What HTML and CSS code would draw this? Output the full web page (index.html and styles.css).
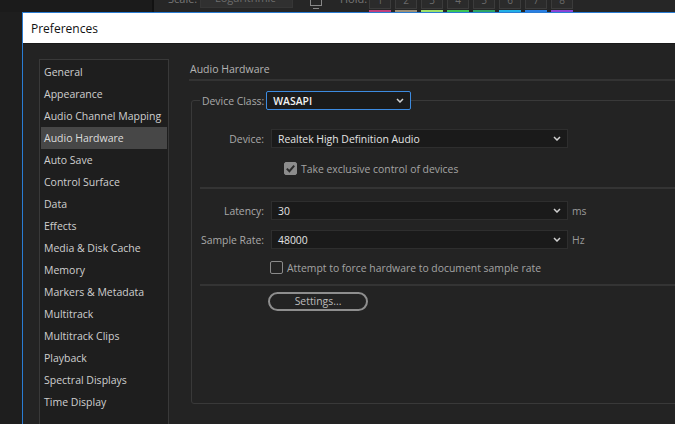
FILE: index.html
```html
<!DOCTYPE html>
<html>
<head>
<meta charset="utf-8">
<title>Preferences</title>
<link rel="stylesheet" href="styles.css">
</head>
<body>
<div class="toolbar">
  <div class="tb-left"></div>
  <div class="tb-panel">
    <span class="tb-label scale-label">Scale:</span>
    <span class="tb-select">Logarithmic
      <svg class="tb-chev" width="8" height="5" viewBox="0 0 8 5"><path d="M1 1l3 3 3-3" stroke="#777" stroke-width="1.4" fill="none"/></svg>
    </span>
    <svg class="tb-icon" width="16" height="20" viewBox="0 0 16 20"><rect x="2.5" y="4.5" width="11" height="10" stroke="#888" fill="none"/><path d="M5 17.5h6" stroke="#888"/></svg>
    <span class="tb-label hold-label">Hold:</span>
    <div class="holds">
      <div class="hold"><span class="hold-box">1</span><span class="hold-bar c1"></span></div>
      <div class="hold"><span class="hold-box">2</span><span class="hold-bar c2"></span></div>
      <div class="hold"><span class="hold-box">3</span><span class="hold-bar c3"></span></div>
      <div class="hold"><span class="hold-box">4</span><span class="hold-bar c4"></span></div>
      <div class="hold"><span class="hold-box">5</span><span class="hold-bar c5"></span></div>
      <div class="hold"><span class="hold-box">6</span><span class="hold-bar c6"></span></div>
      <div class="hold"><span class="hold-box">7</span><span class="hold-bar c7"></span></div>
      <div class="hold"><span class="hold-box">8</span><span class="hold-bar c8"></span></div>
    </div>
  </div>
</div>

<div class="dialog">
  <div class="titlebar">Preferences</div>
  <div class="dlg-body">
    <ul class="nav">
      <li>General</li>
      <li>Appearance</li>
      <li>Audio Channel Mapping</li>
      <li class="active">Audio Hardware</li>
      <li>Auto Save</li>
      <li>Control Surface</li>
      <li>Data</li>
      <li>Effects</li>
      <li>Media &amp; Disk Cache</li>
      <li>Memory</li>
      <li>Markers &amp; Metadata</li>
      <li>Multitrack</li>
      <li>Multitrack Clips</li>
      <li>Playback</li>
      <li>Spectral Displays</li>
      <li>Time Display</li>
    </ul>

    <div class="content">
      <div class="section-title">Audio Hardware</div>
      <fieldset class="group">
        <legend class="legend">
          <span class="legend-inner">
            <span class="legend-label">Device Class:</span>
            <span class="select select-focus">
              <span class="select-text strong">WASAPI</span>
              <svg class="chev" width="8" height="5" viewBox="0 0 8 5"><path d="M1 1l3 3 3-3" stroke="#d0d0d0" stroke-width="1.5" fill="none"/></svg>
            </span>
          </span>
        </legend>

        <div class="form">
          <div class="row row-device">
            <span class="label">Device:</span>
            <span class="select select-wide">
              <span class="select-text">Realtek High Definition Audio</span>
              <svg class="chev" width="8" height="5" viewBox="0 0 8 5"><path d="M1 1l3 3 3-3" stroke="#d0d0d0" stroke-width="1.5" fill="none"/></svg>
            </span>
          </div>
          <div class="check-row check-indent row-cb1">
            <span class="checkbox checked">
              <svg width="13" height="13" viewBox="0 0 13 13"><path d="M2.8 6.6l2.6 2.6 4.8-5.6" stroke="#2b2b2b" stroke-width="2" fill="none"/></svg>
            </span>
            <span class="check-label">Take exclusive control of devices</span>
          </div>

          <div class="sep sep1"></div>

          <div class="row row-latency">
            <span class="label">Latency:</span>
            <span class="select select-wide">
              <span class="select-text">30</span>
              <svg class="chev" width="8" height="5" viewBox="0 0 8 5"><path d="M1 1l3 3 3-3" stroke="#d0d0d0" stroke-width="1.5" fill="none"/></svg>
            </span>
            <span class="unit">ms</span>
          </div>
          <div class="row row-rate">
            <span class="label">Sample Rate:</span>
            <span class="select select-wide">
              <span class="select-text">48000</span>
              <svg class="chev" width="8" height="5" viewBox="0 0 8 5"><path d="M1 1l3 3 3-3" stroke="#d0d0d0" stroke-width="1.5" fill="none"/></svg>
            </span>
            <span class="unit">Hz</span>
          </div>
          <div class="check-row row-cb2">
            <span class="checkbox"></span>
            <span class="check-label">Attempt to force hardware to document sample rate</span>
          </div>

          <div class="sep sep2"></div>

          <div class="btn-row">
            <span class="button">Settings...</span>
          </div>
        </div>
      </fieldset>
    </div>
  </div>
</div>
</body>
</html>
```

FILE: styles.css
```css
html, body {
  margin: 0;
  padding: 0;
  width: 675px;
  height: 424px;
  overflow: hidden;
  background: #1e1e1e;
  font-family: "Open Sans", "Noto Sans", "Liberation Sans", sans-serif;
}

/* background app toolbar (mostly hidden behind dialog) */
.toolbar {
  display: flex;
  height: 12px;
  overflow: hidden;
}
.tb-left {
  width: 152px;
  background: #1b1b1b;
}
.tb-panel {
  flex: 1;
  display: flex;
  align-items: flex-end;
  border-left: 2px solid #121212;
  background: #262626;
  padding-left: 14px;
}
.tb-label {
  font-size: 11px;
  line-height: 20px;
  color: #777;
  margin-bottom: 3px;
  flex: none;
}
.scale-label {
  width: 32px;
}
.tb-select {
  display: flex;
  align-items: center;
  justify-content: space-between;
  width: 93px;
  height: 22px;
  box-sizing: border-box;
  margin-bottom: 4px;
  padding: 0 6px 0 14px;
  background: #303030;
  border: 1px solid #363636;
  color: #6e6e6e;
  font-size: 11px;
  flex: none;
}
.tb-icon {
  margin-left: 15px;
  margin-bottom: 1px;
  flex: none;
}
.hold-label {
  width: 29px;
  margin-left: 16px;
}
.holds {
  display: flex;
  gap: 4px;
  flex: none;
}
.hold {
  display: flex;
  flex-direction: column;
  width: 22px;
}
.hold-box {
  height: 20px;
  box-sizing: border-box;
  border: 1px solid #3b3b3b;
  background: #2b2b2b;
  color: #6a6a6a;
  font-size: 10px;
  text-align: center;
  line-height: 20px;
}
.hold-bar {
  height: 2px;
  margin-top: 1px;
}
.c1 { background: #c0407c; }
.c2 { background: #9c9078; }
.c3 { background: #9ee06a; }
.c4 { background: #3ec456; }
.c5 { background: #2fa565; }
.c6 { background: #22b0e6; }
.c7 { background: #2a7fe2; }
.c8 { background: #8a45d6; }

/* dialog window */
.dialog {
  margin-left: 22px;
  width: 720px;
  border-left: 1px solid #2a7cd2;
  border-top: 1px solid #2a7cd2;
  background: #232323;
}
.titlebar {
  height: 30px;
  line-height: 31px;
  background: #ffffff;
  color: #111;
  font-size: 12px;
  padding-left: 8px;
}
.dlg-body {
  display: flex;
  align-items: flex-start;
  border-top: 1px solid #1a1a1a;
  padding: 15px 0 0 16px;
  height: 400px;
  box-sizing: border-box;
}

.nav {
  list-style: none;
  margin: 0;
  padding: 1px 1px 0;
  width: 130px;
  height: 380px;
  box-sizing: border-box;
  border: 1px solid #393939;
  background: #1e1e1e;
  flex: none;
}
.nav li {
  height: 22px;
  line-height: 22px;
  padding-left: 3px;
  font-size: 10.5px;
  color: #cfcfcf;
  white-space: nowrap;
}
.nav li.active {
  background: #474747;
  color: #dcdcdc;
}

.content {
  flex: 1;
  margin-left: 20px;
}
.section-title {
  height: 20px;
  line-height: 20px;
  font-size: 10.5px;
  color: #b4b4b4;
  padding-left: 1px;
  border-bottom: 2px solid #333333;
}

.group {
  margin: 10px 0 0 2px;
  padding: 0 0 92px 8px;
  border: 1px solid #393939;
  border-radius: 3px;
  min-width: 0;
}
.legend {
  padding: 0 0 0 2px;
}
.legend-inner {
  display: flex;
  align-items: center;
}
.legend-label {
  font-size: 10.4px;
  color: #a9a9a9;
  margin-right: 2px;
}

.select {
  display: flex;
  align-items: center;
  justify-content: space-between;
  height: 19px;
  box-sizing: border-box;
  background: #1a1a1a;
  border: 1px solid #2e2e2e;
  padding: 0 6px 0 6px;
  flex: none;
}
.select-focus {
  width: 145px;
  border: 1px solid #3d8be0;
  border-radius: 2px;
}
.select-wide {
  width: 297px;
}
.select-text {
  font-size: 10.4px;
  color: #e4e4e4;
}
.select-text.strong {
  font-weight: 600;
  color: #f2f2f2;
}
.chev {
  flex: none;
}

.form {
  display: flex;
  flex-direction: column;
  padding-top: 19px;
}
.row {
  display: flex;
  align-items: center;
  gap: 6px;
  height: 19px;
}
.label {
  width: 64px;
  text-align: right;
  font-size: 10.4px;
  color: #a9a9a9;
  white-space: nowrap;
  flex: none;
}
.row .select {
  margin-left: 1px;
}
.unit {
  font-size: 10.4px;
  color: #9a9a9a;
  margin-left: -2px;
}
.row-latency { margin-top: 12px; }
.row-rate { margin-top: 10px; }

.check-row {
  display: flex;
  align-items: center;
  height: 13px;
  padding-left: 70px;
}
.check-indent {
  padding-left: 84px;
}
.row-cb1 { margin-top: 14px; }
.row-cb2 { margin-top: 12px; }
.checkbox {
  width: 13px;
  height: 13px;
  box-sizing: border-box;
  border: 1px solid #8a8a8a;
  border-radius: 2px;
  flex: none;
  display: flex;
}
.checkbox.checked {
  background: #8c8c8c;
  border-color: #8c8c8c;
}
.checkbox svg {
  margin: -1px;
}
.check-label {
  margin-left: 4px;
  font-size: 10.4px;
  color: #a3a3a3;
  white-space: nowrap;
}

.sep {
  height: 2px;
  background: #343434;
}
.sep1 { margin-top: 12px; }
.sep2 { margin-top: 10px; }

.btn-row {
  margin-top: 6px;
  padding-left: 68px;
  display: flex;
}
.button {
  width: 100px;
  height: 19px;
  box-sizing: border-box;
  border: 2px solid #8e8e8e;
  border-radius: 10px;
  font-size: 10.4px;
  line-height: 15px;
  color: #bdbdbd;
  text-align: center;
}
```
